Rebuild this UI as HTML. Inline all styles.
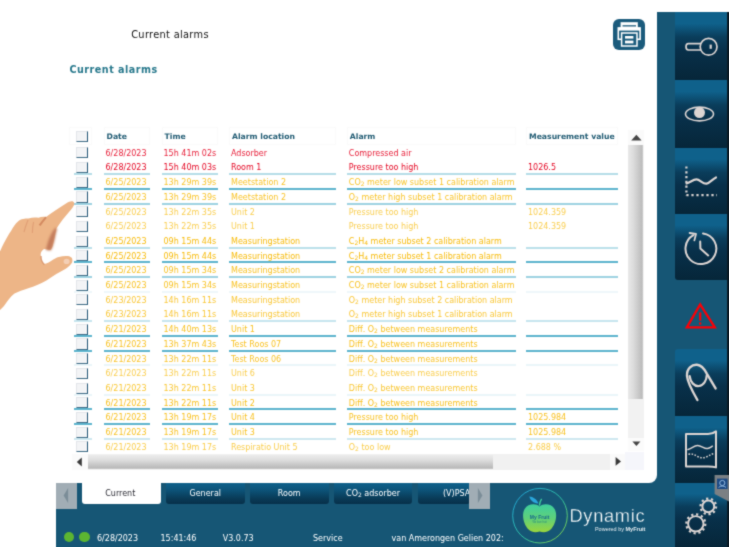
<!DOCTYPE html>
<html lang="en">
<head>
<meta charset="utf-8">
<title>Current alarms</title>
<style>
html,body{margin:0;padding:0;background:#fff;}
body{filter:url(#soft);width:729px;height:547px;overflow:hidden;position:relative;font-family:"DejaVu Sans","Liberation Sans",sans-serif;font-size:8px;color:#222;}
.abs{position:absolute;}
#side{left:657px;top:12px;width:72px;height:535px;background:#165675;}
#bottom{left:56px;top:483px;width:673px;height:64px;background:#165675;}
#fill{left:640px;top:470px;width:20px;height:20px;background:#165675;}
#panel{left:0;top:0;width:657px;height:483px;background:#fff;border-radius:0 0 8px 0;}
#edge{left:727px;top:12px;width:2px;height:535px;background:#0b1a24;}
.sb{position:absolute;left:675px;width:52px;background:linear-gradient(to bottom,#0f618b 0%,#0f618b 17%,#0a3d5b 37%,#08304a 56%,#062639 100%);}
.sb svg{position:absolute;left:0;top:0;overflow:visible;}
.ic{fill:none;stroke:#dcd5d3;stroke-width:2;stroke-linecap:round;stroke-linejoin:round;}
.tab{position:absolute;top:483px;height:21px;border-radius:0 0 3px 3px;background:linear-gradient(to bottom,#0f618b 0%,#0d557b 30%,#093a56 75%,#07304a 100%);color:#fff;text-align:center;line-height:22.6px;font-size:8px;overflow:hidden;white-space:nowrap;}
.tab.cur{background:#fff;color:#2a2a33;box-sizing:border-box;padding-right:2px;}
.nav{position:absolute;top:483px;height:25.5px;background:#a1adb5;}
.st{position:absolute;top:532.5px;height:12px;line-height:12px;color:#fff;font-size:8px;white-space:nowrap;}
.dot{position:absolute;width:10.6px;height:10.6px;border-radius:50%;background:#5cb531;top:531.6px;}
/* table */
.row{position:absolute;left:0;width:657px;height:14.7px;line-height:14.66px;font-size:8px;white-space:nowrap;}
.row.r{--rgb:228,6,34;}
.row.o{--rgb:247,184,0;}
.row .c{color:rgba(var(--rgb),var(--t));}
.c{position:absolute;top:0;height:calc(100% + .9px);box-sizing:border-box;padding-left:2px;padding-top:1.8px;overflow:hidden;border-bottom:2px solid rgba(92,180,205,var(--a));}
.cb{left:74px;width:18.4px;padding:0;opacity:1 !important;}
.dt{left:103.5px;width:46px;}
.tm{left:161.5px;width:56.2px;}
.lo{left:229px;width:107px;}
.al{left:346.8px;width:168.8px;}
.mv{left:526px;width:91.6px;}
.cb i{position:absolute;left:2.2px;top:2.4px;width:9.8px;height:9.1px;background:#f3f4f6;border-right:1.7px solid #245777;border-bottom:1.1px solid #3f6c86;border-top:.6px solid #e3e6ea;border-left:.6px solid #e3e6ea;}
sub{font-size:6px;vertical-align:baseline;position:relative;top:1px;}
.hd{position:absolute;top:127.4px;height:17.2px;line-height:18px;box-sizing:border-box;border:1px solid #fafafa;padding-left:2px;font-weight:bold;color:#1f5a72;font-size:7.7px;white-space:nowrap;overflow:hidden;}
</style>
</head>
<body>
<svg width="0" height="0" style="position:absolute"><defs><filter id="soft" x="0" y="0" width="100%" height="100%" color-interpolation-filters="sRGB"><feConvolveMatrix order="3" kernelMatrix="0.3 1 0.3 1 5.4 1 0.3 1 0.3" divisor="10.6" edgeMode="duplicate" preserveAlpha="true"/></filter></defs></svg>
<div id="side" class="abs"></div>
<div id="bottom" class="abs"></div>
<div id="fill" class="abs"></div>
<div id="panel" class="abs"></div>
<div id="edge" class="abs"></div>

<!-- titles -->
<div class="abs" style="left:131.2px;top:27.6px;font-size:9.8px;line-height:14px;color:#111;letter-spacing:.32px;white-space:nowrap;">Current alarms</div>
<div class="abs" style="left:69.5px;top:63.2px;font-size:9.6px;line-height:14px;font-weight:bold;color:#27788c;letter-spacing:.5px;white-space:nowrap;">Current alarms</div>

<!-- print button -->
<svg class="abs" style="left:613px;top:19px;" width="32" height="31" viewBox="0 0 32 31">
 <rect x="0" y="0" width="32" height="31" rx="6" ry="6" fill="#1b5b7c"/>
 <rect x="7.6" y="3.2" width="17.2" height="6" fill="#fff"/>
 <rect x="9.5" y="6.2" width="13.5" height="1.3" fill="#1b5b7c"/>
 <rect x="5.3" y="9" width="21.8" height="11.3" fill="none" stroke="#fff" stroke-width="1.6"/>
 <rect x="5.3" y="8.6" width="21.8" height="3" fill="#fff"/>
 <rect x="8.6" y="14" width="15.4" height="13" fill="#1b5b7c" stroke="#fff" stroke-width="1.5"/>
 <rect x="12" y="17" width="8.4" height="2.6" fill="#fff"/>
 <rect x="12" y="21.6" width="8.4" height="2.8" fill="#fff"/>
</svg>

<!-- table header -->
<div class="hd" style="left:69.4px;width:22.8px;padding:0;"><i style="position:absolute;left:5.9px;top:2.6px;width:9.8px;height:9.4px;background:#f3f4f6;border-right:1.7px solid #245777;border-bottom:1.1px solid #3f6c86;border-top:.6px solid #e3e6ea;border-left:.6px solid #e3e6ea;"></i></div>
<div class="hd" style="left:103.5px;width:46px;">Date</div>
<div class="hd" style="left:161.5px;width:56.2px;">Time</div>
<div class="hd" style="left:229px;width:107px;">Alarm location</div>
<div class="hd" style="left:346.8px;width:168.8px;">Alarm</div>
<div class="hd" style="left:526px;width:91.6px;">Measurement value</div>

<!-- table rows -->
<div class="row r" style="top:145.00px;--a:0;--t:0.9"><span class="c cb"><i></i></span><span class="c dt">6/28/2023</span><span class="c tm">15h 41m 02s</span><span class="c lo">Adsorber</span><span class="c al">Compressed air</span><span class="c mv"></span></div>
<div class="row r" style="top:159.70px;--a:0.45;--t:1"><span class="c cb"><i></i></span><span class="c dt">6/28/2023</span><span class="c tm">15h 40m 03s</span><span class="c lo">Room 1</span><span class="c al">Pressure too high</span><span class="c mv">1026.5</span></div>
<div class="row o" style="top:174.40px;--a:1;--t:0.85"><span class="c cb"><i></i></span><span class="c dt">6/25/2023</span><span class="c tm">13h 29m 39s</span><span class="c lo">Meetstation 2</span><span class="c al">CO<sub>2</sub> meter low subset 1 calibration alarm</span><span class="c mv"></span></div>
<div class="row o" style="top:189.10px;--a:0.6;--t:0.85"><span class="c cb"><i></i></span><span class="c dt">6/25/2023</span><span class="c tm">13h 29m 39s</span><span class="c lo">Meetstation 2</span><span class="c al">O<sub>2</sub> meter high subset 1 calibration alarm</span><span class="c mv"></span></div>
<div class="row o" style="top:203.80px;--a:0;--t:0.7"><span class="c cb"><i></i></span><span class="c dt">6/25/2023</span><span class="c tm">13h 22m 35s</span><span class="c lo">Unit 2</span><span class="c al">Pressure too high</span><span class="c mv">1024.359</span></div>
<div class="row o" style="top:218.50px;--a:0;--t:0.7"><span class="c cb"><i></i></span><span class="c dt">6/25/2023</span><span class="c tm">13h 22m 35s</span><span class="c lo">Unit 1</span><span class="c al">Pressure too high</span><span class="c mv">1024.359</span></div>
<div class="row o" style="top:233.20px;--a:0.42;--t:0.97"><span class="c cb"><i></i></span><span class="c dt">6/25/2023</span><span class="c tm">09h 15m 44s</span><span class="c lo">Measuringstation</span><span class="c al">C<sub>2</sub>H<sub>4</sub> meter subset 2 calibration alarm</span><span class="c mv"></span></div>
<div class="row o" style="top:247.90px;--a:1;--t:0.97"><span class="c cb"><i></i></span><span class="c dt">6/25/2023</span><span class="c tm">09h 15m 44s</span><span class="c lo">Measuringstation</span><span class="c al">C<sub>2</sub>H<sub>4</sub> meter subset 1 calibration alarm</span><span class="c mv"></span></div>
<div class="row o" style="top:262.60px;--a:0.6;--t:0.88"><span class="c cb"><i></i></span><span class="c dt">6/25/2023</span><span class="c tm">09h 15m 34s</span><span class="c lo">Measuringstation</span><span class="c al">CO<sub>2</sub> meter low subset 2 calibration alarm</span><span class="c mv"></span></div>
<div class="row o" style="top:277.30px;--a:0.1;--t:0.88"><span class="c cb"><i></i></span><span class="c dt">6/25/2023</span><span class="c tm">09h 15m 34s</span><span class="c lo">Measuringstation</span><span class="c al">CO<sub>2</sub> meter low subset 1 calibration alarm</span><span class="c mv"></span></div>
<div class="row o" style="top:292.00px;--a:0;--t:0.8"><span class="c cb"><i></i></span><span class="c dt">6/23/2023</span><span class="c tm">14h 16m 11s</span><span class="c lo">Measuringstation</span><span class="c al">O<sub>2</sub> meter high subset 2 calibration alarm</span><span class="c mv"></span></div>
<div class="row o" style="top:306.70px;--a:0.35;--t:0.8"><span class="c cb"><i></i></span><span class="c dt">6/23/2023</span><span class="c tm">14h 16m 11s</span><span class="c lo">Measuringstation</span><span class="c al">O<sub>2</sub> meter high subset 1 calibration alarm</span><span class="c mv"></span></div>
<div class="row o" style="top:321.40px;--a:1;--t:0.88"><span class="c cb"><i></i></span><span class="c dt">6/21/2023</span><span class="c tm">14h 40m 13s</span><span class="c lo">Unit 1</span><span class="c al">Diff. O<sub>2</sub> between measurements</span><span class="c mv"></span></div>
<div class="row o" style="top:336.10px;--a:1;--t:0.88"><span class="c cb"><i></i></span><span class="c dt">6/21/2023</span><span class="c tm">13h 37m 43s</span><span class="c lo">Test Roos 07</span><span class="c al">Diff. O<sub>2</sub> between measurements</span><span class="c mv"></span></div>
<div class="row o" style="top:350.80px;--a:0.13;--t:0.84"><span class="c cb"><i></i></span><span class="c dt">6/21/2023</span><span class="c tm">13h 22m 11s</span><span class="c lo">Test Roos 06</span><span class="c al">Diff. O<sub>2</sub> between measurements</span><span class="c mv"></span></div>
<div class="row o" style="top:365.50px;--a:0;--t:0.7"><span class="c cb"><i></i></span><span class="c dt">6/21/2023</span><span class="c tm">13h 22m 11s</span><span class="c lo">Unit 6</span><span class="c al">Diff. O<sub>2</sub> between measurements</span><span class="c mv"></span></div>
<div class="row o" style="top:380.20px;--a:0.13;--t:0.82"><span class="c cb"><i></i></span><span class="c dt">6/21/2023</span><span class="c tm">13h 22m 11s</span><span class="c lo">Unit 3</span><span class="c al">Diff. O<sub>2</sub> between measurements</span><span class="c mv"></span></div>
<div class="row o" style="top:394.90px;--a:1;--t:0.9"><span class="c cb"><i></i></span><span class="c dt">6/21/2023</span><span class="c tm">13h 22m 11s</span><span class="c lo">Unit 2</span><span class="c al">Diff. O<sub>2</sub> between measurements</span><span class="c mv"></span></div>
<div class="row o" style="top:409.60px;--a:1;--t:0.88"><span class="c cb"><i></i></span><span class="c dt">6/21/2023</span><span class="c tm">13h 19m 17s</span><span class="c lo">Unit 4</span><span class="c al">Pressure too high</span><span class="c mv">1025.984</span></div>
<div class="row o" style="top:424.30px;--a:0.3;--t:0.88"><span class="c cb"><i></i></span><span class="c dt">6/21/2023</span><span class="c tm">13h 19m 17s</span><span class="c lo">Unit 3</span><span class="c al">Pressure too high</span><span class="c mv">1025.984</span></div>
<div class="row o" style="top:439.00px;--a:0;--t:0.72"><span class="c cb"><i></i></span><span class="c dt">6/21/2023</span><span class="c tm">13h 19m 17s</span><span class="c lo">Respiratio Unit 5</span><span class="c al">O<sub>2</sub> too low</span><span class="c mv">2.688 %</span></div>

<!-- vertical scrollbar -->
<div class="abs" style="left:628px;top:129.5px;width:16px;height:321.5px;background:#f2f2f2;"></div>
<div class="abs" style="left:628px;top:129.5px;width:16px;height:15.3px;background:#fafafa;"></div>
<svg class="abs" style="left:628px;top:129.5px;" width="16" height="16"><path d="M3.2 10.6 L8.4 4.8 L13.6 10.6 Z" fill="#454545"/></svg>
<div class="abs" style="left:628.3px;top:144.8px;width:14.8px;height:253.8px;background:linear-gradient(to right,#e9e9e9 0%,#dcdcdc 35%,#bcbcbc 92%,#d0d0d0 100%);"></div>
<div class="abs" style="left:628px;top:438px;width:16px;height:13px;background:#fbfbfb;"></div>
<svg class="abs" style="left:628px;top:436px;" width="16" height="16"><path d="M4.4 5.6 L12.4 5.6 L8.4 10 Z" fill="#454545"/></svg>

<!-- horizontal scrollbar -->
<div class="abs" style="left:72.3px;top:454.3px;width:553.7px;height:15.3px;background:#f1f1f1;"></div>
<div class="abs" style="left:72.3px;top:454.3px;width:15.7px;height:15.3px;background:#fafafa;"></div>
<svg class="abs" style="left:72.3px;top:454.3px;" width="16" height="16"><path d="M4.8 7.9 L9.8 3.4 L9.8 12.4 Z" fill="#3a3a3a"/></svg>
<div class="abs" style="left:88px;top:454.5px;width:404.8px;height:14.8px;background:linear-gradient(to bottom,#ececec 0%,#dedede 35%,#b9b9b9 92%,#cdcdcd 100%);"></div>
<div class="abs" style="left:610px;top:454.3px;width:15.4px;height:15.3px;background:#fafafa;"></div>
<svg class="abs" style="left:611px;top:454.3px;" width="16" height="16"><path d="M4.6 3 L10 7.4 L4.6 11.8 Z" fill="#3a3a3a"/></svg>
<div class="abs" style="left:625.4px;top:451.8px;width:18.8px;height:17.8px;background:#f5f6fb;"></div>

<!-- hand -->
<svg class="abs" style="left:0;top:190px;" width="90" height="130" viewBox="0 190 90 130">
 <defs>
  <filter id="hb" x="-10%" y="-10%" width="120%" height="120%"><feGaussianBlur stdDeviation="0.5"/></filter>
  <filter id="hb2" x="-30%" y="-30%" width="160%" height="160%"><feGaussianBlur stdDeviation="0.9"/></filter>
 </defs>
 <g filter="url(#hb)">
  <path d="M-2 256 C1 249 6 238 11 231 C13.4 227 15.4 223.6 18 221.6 C21 218.6 25 218.6 28.5 218.6 C32 217.4 35 217.4 38.5 217.8 C41 216.6 43.5 216.4 46 217 C51 213 58 208.4 66 203.4 C70 200.8 73.6 200.6 74.2 203 C74.8 205.4 72 208.6 69 212 C65 216.4 60 223 56.5 228.6 C55 234 54.4 240 53 244.5 C52.4 247 51.6 249 50.5 250 C48 250 46 249 44 249 C41.6 250.6 40.4 253 40.7 255 C40.8 258 41.6 261.4 44 264 C47 263.6 49.4 262 51.4 260.8 C54 259 56.4 257.6 58.8 257 C62 256 65 255.8 67.8 256 C70 256.4 71.6 257.2 72 258.3 C72.8 260.4 72.4 262.4 71 264 C69.4 266 67.4 267.6 65.3 269 C62.4 270.8 59.4 272.4 56.3 274 C53 276.2 49.6 278.4 46.4 280.5 C40 284 34 286.6 29 288 C23 290 18 291.6 14.5 293.6 C10 297 7 302 4 306 L-2 312 Z" fill="#edb587"/>
  <path d="M55.6 227.6 L57 229 C55.4 234 54.8 240 53.2 244.6 C52.6 247 51.8 249 50.6 250.4 L46 250 C47 244 50 234 55.6 227.6 Z" fill="#c47d5c" filter="url(#hb2)"/>
  <path d="M46 217.2 C43.4 220.4 41.2 223 39.6 225.4" stroke="#d0855c" stroke-width="2" fill="none" opacity=".9"/>
  <path d="M28 220 C26.4 224 25 228 24 232" stroke="#dd9a70" stroke-width="1.1" fill="none" opacity=".8"/>
  <path d="M33.6 222 C32.8 225 32.4 229 32.4 233" stroke="#dd9a70" stroke-width="1.1" fill="none" opacity=".8"/>
  <path d="M41 256 C41 259.6 42 262.6 44.4 264.6" stroke="#d69067" stroke-width="1.4" fill="none" opacity=".8"/>
  <ellipse cx="66.6" cy="261.4" rx="3" ry="2.6" fill="#f4d3bd" opacity=".85"/>
 </g>
</svg>

<!-- bottom tabs -->
<div class="nav" style="left:56.3px;width:21px;"><svg width="21" height="26" style="position:absolute;left:0;top:0"><path d="M7.6 12.6 L12.1 5 L12.1 20 Z" fill="#7b8d98"/></svg></div>
<div class="tab cur" style="left:82px;width:78.5px;">Current</div>
<div class="tab" style="left:166px;width:78.5px;">General</div>
<div class="tab" style="left:250px;width:78.5px;">Room</div>
<div class="tab" style="left:334px;width:78px;">CO<sub>2</sub> adsorber</div>
<div class="tab" style="left:418px;width:52px;text-align:left;"><span style="padding-left:25px;">(V)PSA</span></div>
<div class="nav" style="left:469px;width:20.5px;"><svg width="21" height="26" style="position:absolute;left:0;top:0"><path d="M13.4 12.6 L8.9 5 L8.9 20 Z" fill="#7b8d98"/></svg></div>

<!-- status bar -->
<div class="dot" style="left:63.6px;"></div>
<div class="dot" style="left:79px;"></div>
<div class="st" style="left:97px;">6/28/2023</div>
<div class="st" style="left:160.5px;">15:41:46</div>
<div class="st" style="left:222.7px;">V3.0.73</div>
<div class="st" style="left:313px;">Service</div>
<div class="st" style="left:391.5px;">van Amerongen Gelien 202:</div>

<!-- logo -->
<svg class="abs" style="left:508px;top:484px;" width="64" height="63" viewBox="508 484 64 63">
 <defs>
  <linearGradient id="lg1" x1="0" y1="0" x2="1" y2="1"><stop offset="0" stop-color="#1e9fe0"/><stop offset=".55" stop-color="#2fc1a0"/><stop offset="1" stop-color="#8fd23a"/></linearGradient>
  <linearGradient id="lg2" x1="0" y1="0" x2="0" y2="1"><stop offset="0" stop-color="#3ecf9e"/><stop offset=".5" stop-color="#5fd07a"/><stop offset="1" stop-color="#9bd53c"/></linearGradient>
 </defs>
 <circle cx="540" cy="515.7" r="27.3" fill="none" stroke="url(#lg1)" stroke-width="1"/>
 <path d="M539.6 506.4 C536 503.2 528 503.4 524.6 509 C521.4 514.6 523.4 524.6 528.6 529.6 C532 532.8 536 532.6 539.6 531.6 C543.2 532.6 547.2 532.8 550.6 529.6 C555.8 524.6 557.8 514.6 554.6 509 C551.2 503.4 543.2 503.2 539.6 506.4 Z" fill="url(#lg2)"/>
 <path d="M539.4 505.6 C539.6 503 540.4 500.6 541.6 498.8" stroke="#3ecf9e" stroke-width="1.3" fill="none"/>
 <path d="M538.4 503.4 C536.6 499.2 533 496.8 529.4 496.6 C530.2 500.6 533.6 503.6 538.4 503.4 Z" fill="#2aa6dc"/>
 <text x="539.6" y="518.6" font-family="'Liberation Sans',sans-serif" font-size="5" font-weight="bold" fill="#1a6a8c" text-anchor="middle">My Fruit</text>
 <text x="539.6" y="523.2" font-family="'Liberation Sans',sans-serif" font-size="2.6" fill="#2a8a7c" text-anchor="middle">We love fruit</text>
</svg>
<div class="abs" style="left:569.4px;top:504.8px;font-family:'Liberation Sans',sans-serif;font-size:18.3px;line-height:22px;color:#fff;letter-spacing:.7px;-webkit-text-stroke:.32px #165675;white-space:nowrap;">Dynamic</div>
<div class="abs" style="left:590px;top:525.8px;width:55.4px;font-family:'Liberation Sans',sans-serif;font-size:5.5px;line-height:7px;color:#e6edf1;white-space:nowrap;text-align:right;">Powered by <b>MyFruit</b></div>

<!-- sidebar buttons -->
<div class="sb" style="top:12px;height:67.6px;">
 <svg width="52" height="68" viewBox="675 12 52 68">
  <circle class="ic" cx="708.6" cy="46.8" r="8.4" style="stroke-width:1.7"/>
  <path class="ic" style="stroke-width:1.7" d="M700.6 43.6 L688.4 43.6 C685.2 43.6 685.2 50 688.4 50 L700.6 50"/>
  <rect x="709.6" y="44.6" width="2.2" height="4.2" fill="#dcd5d3"/>
 </svg>
</div>
<div class="sb" style="top:80px;height:67.6px;">
 <svg width="52" height="68" viewBox="675 80 52 68">
  <ellipse class="ic" cx="699.5" cy="114" rx="14" ry="6.9" style="stroke-width:1.6"/>
  <circle cx="699.5" cy="112.6" r="5.5" fill="#dcd5d3"/>
 </svg>
</div>
<div class="sb" style="top:148px;height:65.8px;">
 <svg width="52" height="66" viewBox="675 148 52 66">
  <path class="ic" style="stroke-width:2.2" d="M686.6 183.4 C690 182.6 693 179.4 696.4 179.4 C700 179.4 703 184.4 706.6 183.6 C710 182.8 712.6 179 716 177.4"/>
  <path d="M686.4 166.4 L686.4 195.4" stroke="#dcd5d3" stroke-width="2.2" stroke-dasharray="2.2 2.6" fill="none"/>
  <path d="M686.4 195.2 L717 195.2" stroke="#dcd5d3" stroke-width="2.2" stroke-dasharray="2.2 2.8" fill="none"/>
 </svg>
</div>
<div class="sb" style="top:214.2px;height:66.2px;border-radius:0 0 0 3px;">
 <svg width="52" height="67" viewBox="675 214 52 67">
  <path class="ic" style="stroke-width:2" d="M703 233.4 A15.4 15.4 0 1 1 693.4 235.2"/>
  <path class="ic" style="stroke-width:1.8" d="M689.6 233 L696 234 L694.4 240.4"/>
  <path class="ic" style="stroke-width:2" d="M700.2 241.6 L700.4 248.4 L708.2 255.4"/>
 </svg>
</div>
<!-- active alarm button (no background) -->
<svg class="abs" style="left:675px;top:281px;" width="54" height="68" viewBox="675 281 54 68">
 <path d="M700.2 304.4 L686.8 327.4 L714.8 327.4 Z" fill="none" stroke="#fb0007" stroke-width="2.3" stroke-linejoin="miter"/>
 <path d="M700.2 312.4 L700.2 320.6" stroke="#fb0007" stroke-width="2.2" fill="none"/>
 <rect x="699.1" y="322.4" width="2.2" height="2.2" fill="#fb0007"/>
</svg>
<div class="sb" style="top:349px;height:66.6px;border-radius:3px 0 0 0;">
 <svg width="52" height="67" viewBox="675 349 52 67">
  <path class="ic" style="stroke-width:2.4" d="M697.4 400 C692.6 391.6 687.4 382 687 376 C686.6 368.4 692 364.4 697 364.8 C702 365.2 704.6 369.4 706.8 373.6 L715.6 388.4"/>
  <path class="ic" style="stroke-width:2.2" d="M689.6 376 C690.4 382.4 694.4 386.6 699 386 C703.6 385.4 706.6 380.6 706.8 375"/>
 </svg>
</div>
<div class="sb" style="top:416px;height:67px;">
 <svg width="52" height="67" viewBox="675 416 52 67">
  <path class="ic" style="stroke-width:2" d="M686 434 L708 434 C711 434 714 433 716 431.4 L716 467.4 C714 466.6 711 466.4 708 466.4 L686 466.4 Z"/>
  <path class="ic" style="stroke-width:1.5" d="M688 449.6 C691.4 448.8 694 445.6 697.6 445.6 C701.4 445.6 704 449 707.4 448.6 C709.6 448.3 711 447 712.4 446.2"/>
  <path d="M688.4 454.2 C692 453.6 694.4 454.6 697.4 456.4 C700.4 458.2 703.6 458.2 706.6 456.8 C709 455.6 711 454.6 713.6 453.4" stroke="#dcd5d3" stroke-width="1.5" stroke-dasharray="1.6 1.5" fill="none"/>
 </svg>
</div>
<div class="sb" style="top:483.2px;height:63.8px;">
 <svg width="52" height="64" viewBox="675 483.2 52 64">
  <circle cx="695.8" cy="524" r="7.7" fill="none" stroke="#dcd5d3" stroke-width="1.9"/>
  <circle cx="695.8" cy="524" r="9.5" fill="none" stroke="#dcd5d3" stroke-width="2.2" stroke-dasharray="2.2 2.774"/>
  <circle cx="708.3" cy="506.6" r="5.9" fill="none" stroke="#dcd5d3" stroke-width="2"/>
  <circle cx="708.3" cy="506.6" r="7.8" fill="none" stroke="#dcd5d3" stroke-width="2.2" stroke-dasharray="2.2 2.7"/>
 </svg>
</div>
<!-- small grey tag -->
<svg class="abs" style="left:714px;top:475px;" width="15" height="28" viewBox="714 475 15 28">
 <path d="M714.6 475 L729 475 L729 501.6 L714.6 494 Z" fill="#7b8084"/>
 <rect x="717" y="478.6" width="10.6" height="10.4" fill="#1c4a84"/>
 <circle cx="722.3" cy="483" r="2.6" fill="none" stroke="#9cc2e6" stroke-width=".9"/>
 <path d="M718.6 487.4 C720.6 485.6 724 485.6 726 487.4" stroke="#9cc2e6" stroke-width=".9" fill="none"/>
</svg>
</body>
</html>
